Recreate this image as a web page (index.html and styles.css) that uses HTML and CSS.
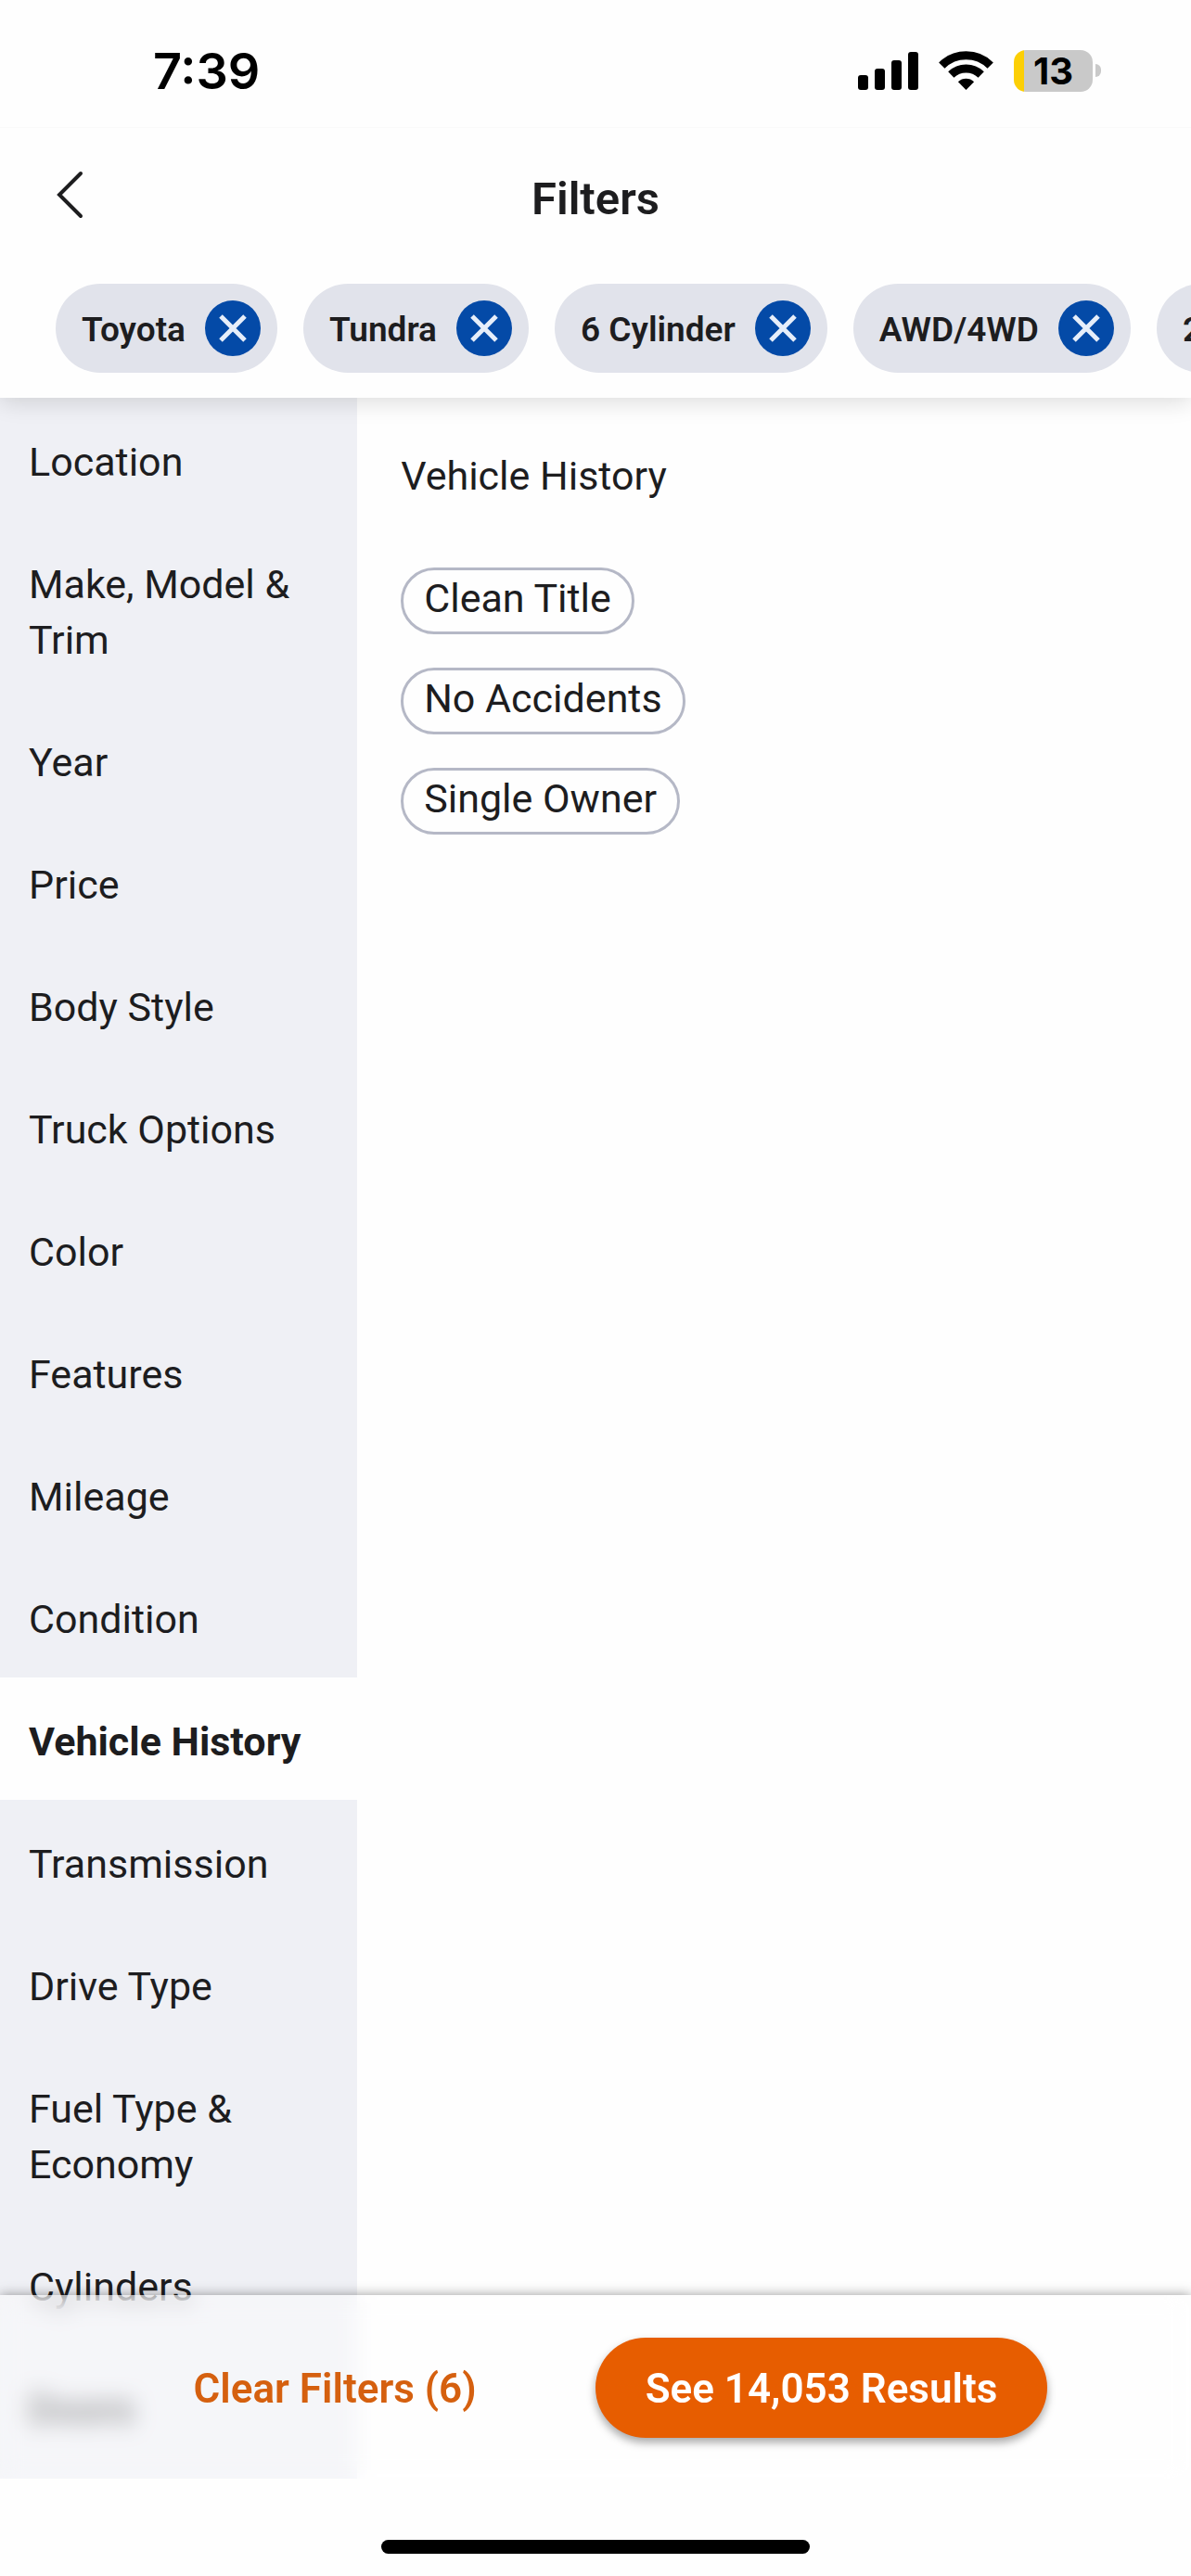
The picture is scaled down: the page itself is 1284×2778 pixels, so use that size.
FILE: index.html
```html
<!DOCTYPE html>
<html lang="en">
<head>
    <meta charset="UTF-8">
    <meta name="viewport" content="width=device-width, initial-scale=1.0">
    <title>Filters</title>
    <link rel="stylesheet" href="styles.css">
</head>
<body>
    <div class="status-bar">
        <span class="time">7:39</span>
        <div class="status-icons">
            <svg width="146" height="45" viewBox="0 0 146 45" role="img" aria-label="Signal and Wi-Fi">
                <rect x="0" y="27" width="11" height="16" rx="3"/>
                <rect x="18" y="20" width="11" height="23" rx="3"/>
                <rect x="36" y="11" width="11" height="32" rx="3"/>
                <rect x="54" y="2" width="11" height="41" rx="3"/>
                <g fill="none" stroke="#000" stroke-width="9">
                    <path d="M90.3 16.6a37.3 37.3 0 0 1 52.4 0"/>
                    <path d="M100.3 26.5a23.3 23.3 0 0 1 32.4 0"/>
                </g>
                <path d="M116.5 43l-8.6-8.8a12.6 12.6 0 0 1 17.2 0z"/>
            </svg>
            <div class="battery">13</div>
            <div class="battery-cap"></div>
        </div>
    </div>

    <header class="header">
        <div class="title-row">
            <button class="back-btn" aria-label="Back">
                <svg width="30" height="52" viewBox="0 0 30 52" fill="none" stroke="#1d1d1f" stroke-width="4" stroke-linecap="round">
                    <path d="M27 3L4 26l23 23"/>
                </svg>
            </button>
            <h1>Filters</h1>
        </div>
        <div class="applied">
            <div class="applied-chip">
                <span>Toyota</span>
                <button class="remove-btn" aria-label="Remove Toyota"><svg width="32" height="32" viewBox="0 0 32 32"><path d="M3 3l26 26M29 3L3 29"/></svg></button>
            </div>
            <div class="applied-chip">
                <span>Tundra</span>
                <button class="remove-btn" aria-label="Remove Tundra"><svg width="32" height="32" viewBox="0 0 32 32"><path d="M3 3l26 26M29 3L3 29"/></svg></button>
            </div>
            <div class="applied-chip">
                <span>6 Cylinder</span>
                <button class="remove-btn" aria-label="Remove 6 Cylinder"><svg width="32" height="32" viewBox="0 0 32 32"><path d="M3 3l26 26M29 3L3 29"/></svg></button>
            </div>
            <div class="applied-chip">
                <span>AWD/4WD</span>
                <button class="remove-btn" aria-label="Remove AWD/4WD"><svg width="32" height="32" viewBox="0 0 32 32"><path d="M3 3l26 26M29 3L3 29"/></svg></button>
            </div>
            <div class="applied-chip">
                <span>2</span>
                <button class="remove-btn" aria-label="Remove filter"><svg width="32" height="32" viewBox="0 0 32 32"><path d="M3 3l26 26M29 3L3 29"/></svg></button>
            </div>
        </div>
    </header>

    <main class="content">
        <nav class="sidebar">
            <a href="#">Location</a>
            <a href="#">Make, Model &amp; Trim</a>
            <a href="#">Year</a>
            <a href="#">Price</a>
            <a href="#">Body Style</a>
            <a href="#">Truck Options</a>
            <a href="#">Color</a>
            <a href="#">Features</a>
            <a href="#">Mileage</a>
            <a href="#">Condition</a>
            <a href="#" class="active">Vehicle History</a>
            <a href="#">Transmission</a>
            <a href="#">Drive Type</a>
            <a href="#">Fuel Type &amp; Economy</a>
            <a href="#">Cylinders</a>
            <a href="#">Doors</a>
        </nav>
        <section class="panel">
            <h2>Vehicle History</h2>
            <div class="options">
                <button class="option">Clean Title</button>
                <button class="option">No Accidents</button>
                <button class="option">Single Owner</button>
            </div>
        </section>
    </main>

    <footer class="footer">
        <div class="actions">
            <button class="clear-btn">Clear Filters (6)</button>
            <button class="results-btn">See 14,053 Results</button>
        </div>
        <div class="home-area">
            <div class="home-indicator"></div>
        </div>
    </footer>
</body>
</html>
```
FILE: styles.css
```css
* {
    box-sizing: border-box;
}

body {
    margin: 0;
    height: 100vh;
    padding-bottom: 105px;
    display: flex;
    flex-direction: column;
    overflow: hidden;
    background-color: #fefefe;
    color: #1d1d1f;
    font-family: Roboto, "Liberation Sans", sans-serif;
    font-size: 43px;
    line-height: 60px;
}

button {
    border: none;
    background: none;
    padding: 0;
    color: inherit;
    font: inherit;
    cursor: pointer;
}

svg {
    display: block;
}

.status-bar {
    position: relative;
    z-index: 2;
    flex: none;
    display: flex;
    justify-content: space-between;
    align-items: center;
    height: 138px;
    padding: 15px 97px 0 165px;
    border-bottom: 1px solid #fafafa;
    background-color: #fefefe;
    color: #000;
    font-family: Inter, sans-serif;
}

.time {
    padding-top: 2px;
    font-size: 54px;
    font-weight: 600;
}

.status-icons {
    display: flex;
    align-items: center;
}

.battery {
    width: 85px;
    height: 45px;
    margin-left: 22px;
    border-radius: 13px;
    background: linear-gradient(to right, #fccf05 11px, #c9c9c9 11px);
    font-size: 40px;
    font-weight: 700;
    line-height: 45px;
    text-align: center;
}

.battery-cap {
    width: 6px;
    height: 14px;
    margin-left: 3px;
    border-radius: 0 7px 7px 0;
    background-color: #c9c9c9;
}

.header {
    position: relative;
    z-index: 1;
    flex: none;
    background-color: #fefefe;
    padding: 42px 0 27px;
    box-shadow: 0 4px 24px rgba(0, 0, 0, 0.14);
}

.title-row {
    display: grid;
    grid-template-columns: 1fr auto 1fr;
    align-items: center;
    padding: 0 60px;
    margin-bottom: 58px;
}

.back-btn {
    justify-self: start;
    padding: 4px 0 12px;
}

h1 {
    margin: 0;
    padding-top: 2px;
    font-size: 49px;
    font-weight: 600;
}

.applied {
    display: flex;
    gap: 28px;
    padding-left: 60px;
    overflow: hidden;
}

.applied-chip {
    flex: none;
    display: flex;
    align-items: center;
    gap: 21px;
    height: 96px;
    padding: 0 18px 0 28px;
    border-radius: 48px;
    background-color: #e1e3eb;
    font-size: 37px;
    font-weight: 600;
}

.applied-chip span {
    padding-top: 4px;
}

.remove-btn {
    display: flex;
    justify-content: center;
    align-items: center;
    width: 60px;
    height: 60px;
    border-radius: 50%;
    background-color: #044aa7;
}

.remove-btn path {
    stroke: #e6eefa;
    stroke-width: 5;
}

.content {
    flex: 1;
    min-height: 0;
    display: grid;
    grid-template-columns: 30% 1fr;
    overflow: hidden;
}

.sidebar {
    background-color: #eff0f5;
}

.sidebar a {
    display: block;
    padding: 39px 24px 33px 31px;
    color: inherit;
    text-decoration: none;
}

.sidebar .active {
    background-color: #fefefe;
    font-weight: 700;
}

.panel {
    padding: 54px 47px;
}

h2 {
    margin: 0 0 69px;
    font-size: 43px;
    font-weight: 400;
}

.options {
    display: flex;
    flex-direction: column;
    align-items: flex-start;
    gap: 36px;
}

.option {
    padding: 0 22px 6px;
    border: 3px solid #b5b8c6;
    border-radius: 36px;
}

.footer {
    position: fixed;
    left: 0;
    right: 0;
    bottom: 0;
    box-shadow: 0 0 12px rgba(0, 0, 0, 0.4);
}

.actions {
    display: flex;
    justify-content: center;
    align-items: center;
    gap: 128px;
    padding: 46px 0 44px 54px;
    background-color: rgba(255, 255, 255, 0.4);
    backdrop-filter: blur(12px);
    font-size: 44px;
    font-weight: 600;
}

.clear-btn {
    padding-top: 2px;
    color: #d5600f;
}

.results-btn {
    height: 108px;
    padding: 2px 54px 0;
    border-radius: 54px;
    background-color: #e75d00;
    color: #fff;
    box-shadow: 0 5px 10px rgba(0, 0, 0, 0.35);
}

.home-area {
    height: 105px;
    padding-top: 66px;
    background-color: #fefefe;
}

.home-indicator {
    width: 36%;
    height: 15px;
    margin: 0 auto;
    border-radius: 8px;
    background-color: #000;
}
```
